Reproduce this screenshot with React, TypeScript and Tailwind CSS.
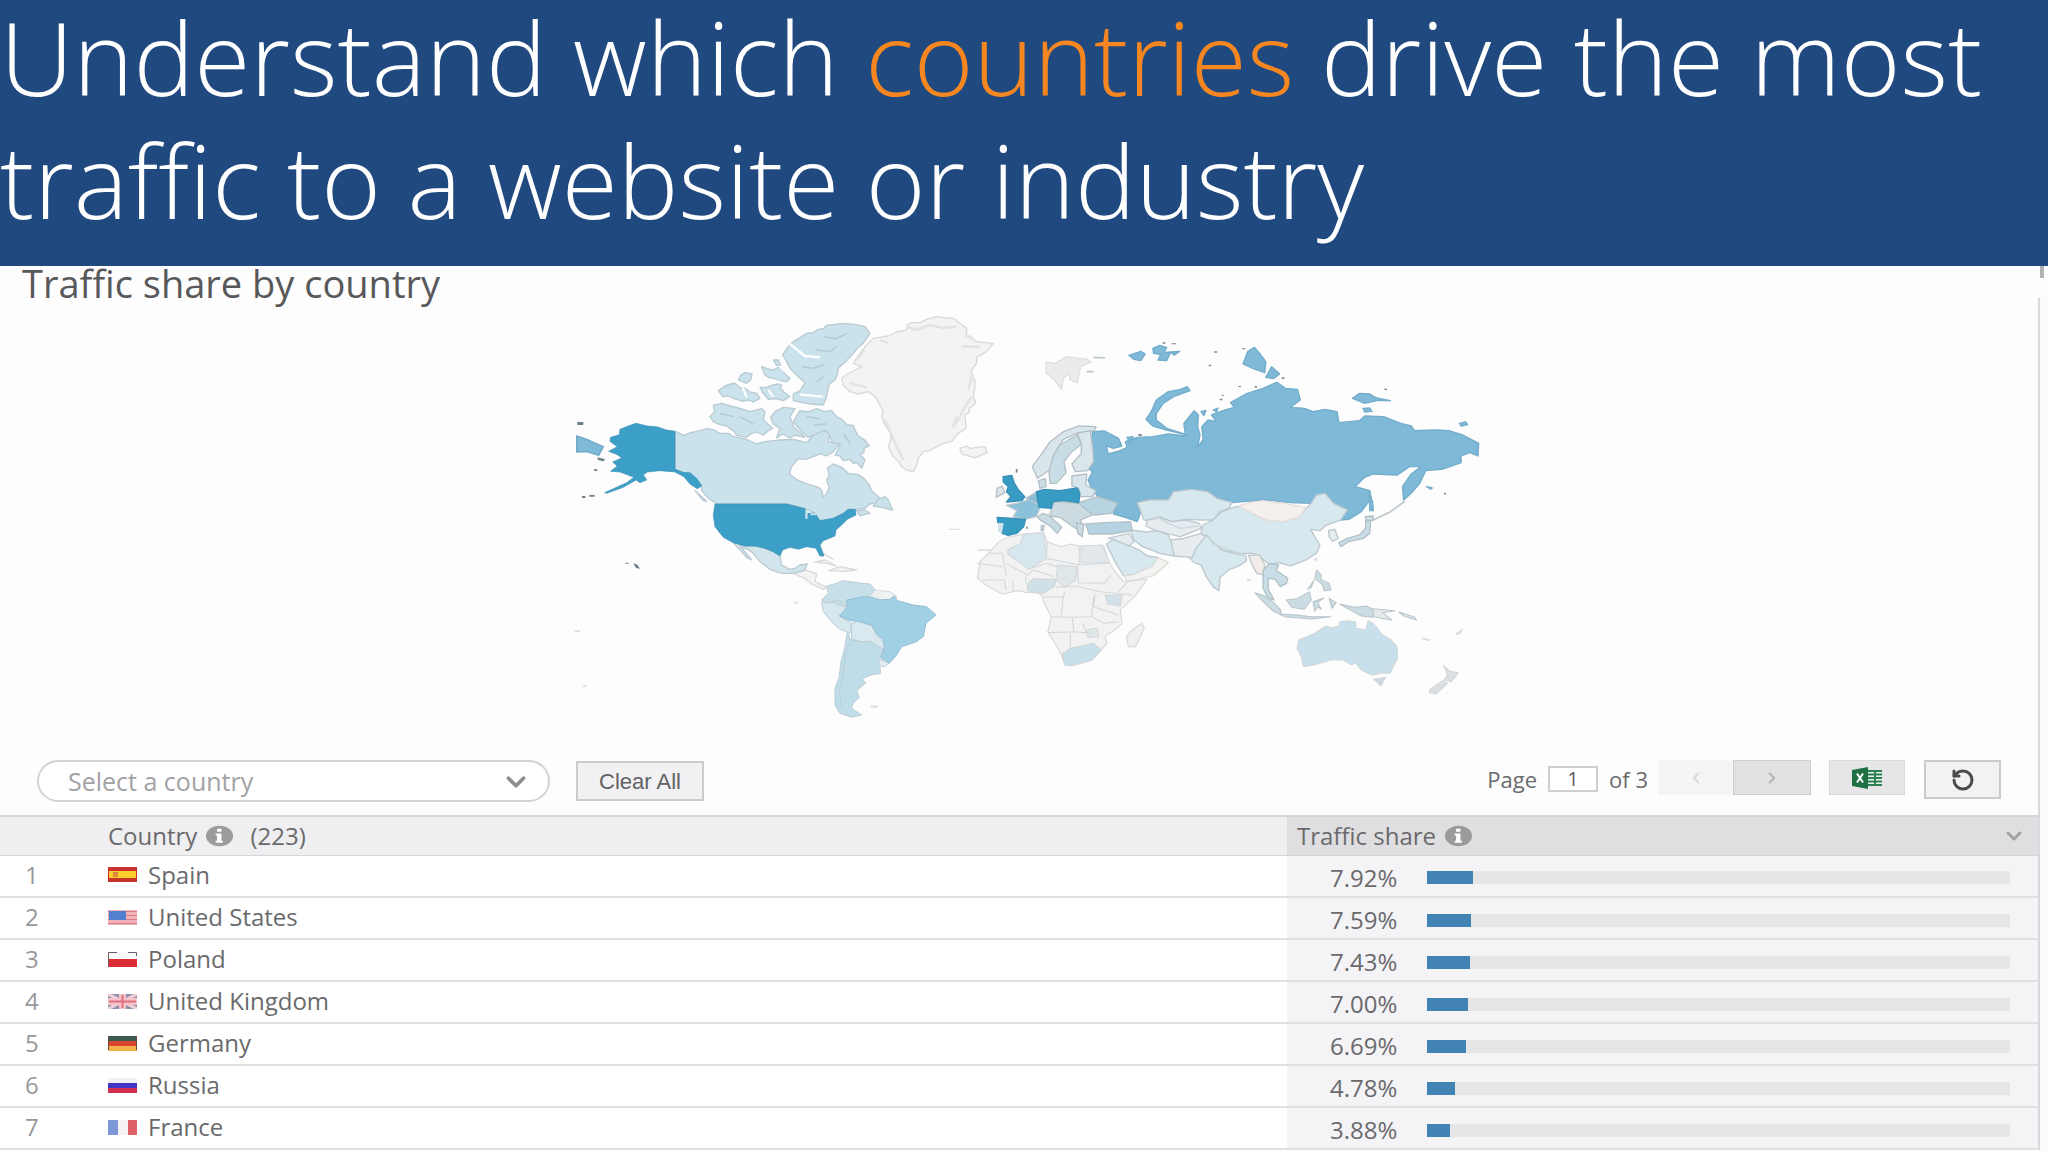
import React from 'react';
import { ChevronDown, ChevronLeft, ChevronRight, RotateCcw } from 'lucide-react';

const countries = [
  { name: 'Spain', share: 7.92 },
  { name: 'United States', share: 7.59 },
  { name: 'Poland', share: 7.43 },
  { name: 'United Kingdom', share: 7.0 },
  { name: 'Germany', share: 6.69 },
  { name: 'Russia', share: 4.78 },
  { name: 'France', share: 3.88 },
];

function Flag({ name }: { name: string }) {
  return (
    <svg viewBox="0 0 29 15" className="w-[29px] h-[15px] shrink-0" aria-hidden="true">
      {name === 'Spain' && (
        <>
          <path fill="#c8332b" d="M0 0h29v15H0z" />
          <path fill="#fbd02e" d="M1 4h27v7H1z" />
          <path fill="#dd8a3c" d="M5 5h5v5H5z" />
        </>
      )}
      {name === 'United States' && (
        <>
          <path fill="#f0b4b8" d="M0 0h29v15H0z" />
          <path stroke="#dd7d86" d="M0 1.500h29M0 5.500h29M0 9.500h29M0 13.500h29" />
          <path fill="#5080cf" d="M1 1h17v9H1z" />
        </>
      )}
      {name === 'Poland' && (
        <>
          <path fill="#fafafa" d="M0 0h29v8H0z" />
          <path fill="#de2c37" d="M0 7h29v8H0z" />
          <path stroke="#6e5c60" fill="none" d="M0.500 14V0.500H9M20 0.500h8.500V4" />
        </>
      )}
      {name === 'United Kingdom' && (
        <>
          <path fill="#8c8fae" d="M0 0h29v15H0z" />
          <path stroke="#f3cfd5" strokeWidth="3" d="M0 0l29 15M29 0L0 15" />
          <path stroke="#f6c3ca" strokeWidth="7" d="M0 7.500h29M14.500 0v15" />
          <path stroke="#e0707f" strokeWidth="2" d="M1 7.500h27M14.500 1v13" />
        </>
      )}
      {name === 'Germany' && (
        <>
          <path fill="#3c5a50" d="M0 0h29v5H0z" />
          <path fill="#d8452f" d="M0 5h29v5H0z" />
          <path fill="#f2b24a" d="M0 10h29v5H0z" />
          <path stroke="#6f4a3a" fill="none" d="M0.500 0v14M28.500 0v14" />
        </>
      )}
      {name === 'Russia' && (
        <>
          <path fill="#f1eef4" d="M0 0h29v5H0z" />
          <path fill="#3f36c4" d="M0 5h29v5H0z" />
          <path fill="#d2304f" d="M0 10h29v5H0z" />
        </>
      )}
      {name === 'France' && (
        <>
          <path fill="#7d98d8" d="M0 0h10v15H0z" />
          <path fill="#f6f1f4" d="M10 0h10v15H10z" />
          <path fill="#de6168" d="M20 0h9v15h-9z" />
        </>
      )}
    </svg>
  );
}

function InfoIcon() {
  return (
    <svg viewBox="0 0 30 22" className="w-[29px] h-[22px] shrink-0" aria-hidden="true">
      <ellipse cx="15" cy="11" rx="14" ry="10.500" fill="#9b9b9d" />
      <path fill="#fff" d="M12.500 3.500h4.500v3h-4.500zM11 8.500h6v7.500h1.500v2H11v-2h1.500v-5.500H11z" />
    </svg>
  );
}

function ExcelIcon() {
  return (
    <svg viewBox="0 0 32 22" className="w-[32px] h-[22px]" aria-hidden="true">
      <path fill="#e7f2ea" d="M16 3h15v16H16z" />
      <path stroke="#2c8052" strokeWidth="2" d="M17 4h14M17 7.500h14M17 11h14M17 14.500h14M17 18h14M24 3v16" />
      <path fill="#1f7145" d="M1 3l16-3v22L1 19z" />
      <path stroke="#fff" strokeWidth="2" d="M6 6.500l6 9M12 6.500l-6 9" />
    </svg>
  );
}

function WorldMap() {
  return (
    <svg viewBox="-11 0 940 430" className="block w-[940px] max-w-full h-auto" role="img" aria-label="Traffic share map" strokeLinejoin="round">
      {/* North America */}
      <g transform="scale(.3333)" stroke="#b9cad2" strokeWidth="4">
        <g fill="#c9e2eb">
          <path d="M345 394L372 406 392 398 420 392 440 386 462 390 480 400 505 400 520 410 560 418 590 432 620 424 660 420 700 418 740 428 765 400 790 392 810 400 805 425 838 432 820 455 800 468 780 462 760 470 738 478 715 476 695 500 688 522 712 540 740 552 775 562 785 570 790 592 800 580 808 562 800 540 808 525 802 505 820 492 845 502 865 520 895 524 912 535 928 555 935 572 955 590 968 605 930 612 915 625 885 628 850 640 820 655 780 662 765 640 735 626 680 612 470 612 445 595 425 572 425 556 395 530 372 518 345 508Z" />
          <path d="M720 332L745 336 770 326 792 334 815 332 830 350 845 358 862 374 880 376 886 392 895 408 914 420 928 438 912 445 912 458 900 462 915 480 905 505 892 488 880 490 868 478 850 482 840 468 826 465 842 432 818 428 808 402 795 390 772 400 745 412 722 392 700 365Z" />
          <path d="M460 316L485 310 510 318 540 325 570 335 605 326 615 335 610 360 638 385 625 392 610 405 590 396 575 400 560 412 530 406 520 392 500 378 480 374 460 365 450 350 464 335Z" />
          <path d="M632 352L645 335 670 322 705 326 690 350 702 382 735 412 705 405 690 414 668 402 650 414 660 385 640 372Z" />
          <path d="M668 165L685 140 700 125 722 112 740 100 760 98 775 88 790 86 800 76 850 70 890 74 915 80 930 100 910 130 895 142 880 160 858 184 835 205 832 225 825 240 808 252 805 265 800 290 790 315 750 312 700 302 700 282 720 272 735 248 715 230 690 205 680 185Z" />
          <path d="M475 272L495 258 512 252 525 250 538 262 555 265 570 276 590 280 600 295 580 306 565 300 550 304 520 295 505 288 488 290ZM535 240L542 226 555 218 576 222 572 240 560 250ZM605 200L622 206 640 210 655 202 670 205 676 222 690 235 680 245 655 242 640 235 625 232 615 225ZM600 262L620 262 640 255 665 250 662 265 672 276 690 290 670 302 650 296 625 298 610 280ZM640 180L655 180 662 195 650 196Z" />
          <path d="M955 598L975 590 985 600 990 612 998 630 965 622 940 618ZM890 632L915 630 930 640 900 648ZM405 572L425 590 440 604 430 602Z" />
        </g>
        <path fill="none" stroke="#fdfeff" strokeWidth="7" d="M690 132L735 168 780 172M660 200L700 235 730 250M720 284L790 290M640 240L690 258M548 262L560 292M625 270L640 290" />
        <path fill="none" stroke="#b4c8d1" d="M790 110L830 116 860 100M770 150L810 155 830 140M725 200L760 205 790 195M790 230L770 245M740 350L780 356M760 375L800 372M850 400L870 430M480 340L520 350M540 350L580 372" />
        <g fill="#f3f3f5" stroke="#d9d9dc" strokeWidth="4">
          <path d="M845 235L862 222 905 200 880 190 900 160 920 135 940 115 985 108 1010 96 1040 90 1042 74 1055 68 1080 68 1100 58 1130 50 1160 54 1180 55 1200 70 1220 85 1220 105 1250 125 1300 130 1280 155 1250 172 1250 190 1235 210 1235 230 1245 240 1245 260 1240 290 1248 310 1228 325 1228 338 1215 345 1218 385 1195 400 1175 425 1150 430 1130 440 1110 452 1090 455 1075 475 1070 495 1060 515 1040 510 1025 500 1012 480 1000 470 985 440 992 420 992 400 975 375 965 350 970 335 960 315 945 290 925 275 895 282 870 275 850 255Z" />
          <path d="M1200 445L1222 438 1230 446 1250 442 1275 440 1282 458 1245 474 1205 462Z" />
          <path d="M700 820L735 810 770 822 765 845 800 862 790 868 755 852 735 836Z" />
          <path d="M765 786L795 780 830 798 800 790ZM805 812L840 800 890 810 850 814ZM790 760L820 778" />
        </g>
        <path fill="none" stroke="#e3e3e6" strokeWidth="8" d="M1040 80L1070 90 1110 75 1150 84 1190 80M1215 105L1240 115M1205 140L1260 140M960 120L985 130M890 180L915 150M870 250L920 262M975 360L990 395 1010 440 1030 480M1235 290L1215 320 1200 350 1180 380 1190 350M1238 220L1225 270" />
        <path fill="#d3e5ec" d="M520 728L555 738 585 738 615 745 640 755 660 768 665 795 690 808 705 805 720 795 742 792 732 812 700 820 665 820 630 808 600 785 575 755 540 738 575 780 560 772Z" />
        <g fill="#3c9fc7" stroke="#3990b5" strokeWidth="2">
          <path d="M152 412L178 404 180 388 205 378 228 370 262 378 290 380 320 390 345 394 345 508 372 518 390 518 410 535 425 558 412 566 390 552 372 530 345 516 300 512 262 516 250 524 260 540 240 548 228 540 190 562 140 580 134 578 200 548 222 532 180 516 152 514 172 498 158 486 185 474 172 464 146 454 172 440 150 424Z" />
          <path d="M465 612L680 612 735 626 740 640 765 640 780 662 820 655 850 640 865 628 886 628 888 645 862 658 845 675 828 690 825 708 790 722 780 735 792 768 780 768 768 745 740 740 715 748 690 742 668 750 660 768 640 755 615 745 585 738 555 738 520 728 490 712 465 680 460 645Z" />
          <path fill="#6d8089" stroke="none" d="M66 588h10v6H66zM88 585h16v5H88zM220 790l12 4 8 12-12-2zM196 788h10v3h-10zM52 366h18v9H52zM112 472l24 6-6 6-16-4zM1368 508h5v8h-5zM102 508h10v5h-10z" />
        </g>
        <path fill="#c9e2eb" stroke="none" d="M736 632h7v24h-7zM752 640h16v6h-16z" />
        <path fill="#7fb9d8" stroke="#6fa8c6" d="M50 408L85 420 130 440 116 466 80 455 50 456Z" />
      </g>

      {/* Europe and Asia */}
      <g transform="translate(400 20) scale(.3444 .3333)" stroke="#bdc9ce" strokeWidth="4">
        <g fill="#7fb9d8" stroke="#73adcb">
          <path d="M385 335L420 333 460 355 470 378 445 385 425 378 430 402 465 392 485 382 480 365 515 352 560 350 605 342 655 348 650 310 680 272 692 285 690 320 697 345 690 380 706 360 702 320 720 300 745 305 730 285 770 270 797 262 785 248 830 222 880 205 920 187 945 205 980 208 988 240 960 262 1000 265 1025 275 1060 268 1095 275 1100 308 1160 302 1175 288 1230 290 1280 310 1310 318 1320 332 1380 330 1420 332 1460 345 1506 370 1504 408 1480 398 1455 408 1455 428 1400 448 1352 452 1335 490 1310 520 1288 540 1285 500 1310 462 1338 440 1305 440 1270 465 1200 462 1175 472 1148 500 1190 512 1194 535 1165 575 1130 598 1102 600 1125 570 1085 550 1070 530 1050 522 1020 550 960 548 890 540 820 545 790 548 745 535 720 515 670 508 620 515 605 540 550 540 515 548 525 575 515 605 480 592 445 582 458 550 400 530 380 500 372 480 385 455 372 445 388 430 380 380Z" />
          <path d="M540 298L555 275 570 240 605 215 640 208 660 200 668 212 620 230 590 250 570 280 570 300 600 325 660 345 600 330 560 318Z" />
          <path d="M855 82L870 100 888 125 885 158 850 145 822 132 835 95ZM905 140L928 162 910 176 888 172Z" />
          <path d="M490 106L525 94 538 102 525 122 505 118ZM560 85L580 76 600 82 592 98 612 96 600 122 575 120 582 104 562 100ZM612 96L638 94 622 106Z" />
          <path d="M1140 235L1160 220 1190 222 1210 234 1250 242 1210 242 1175 250ZM1170 265L1190 264 1196 274 1175 276ZM1450 310L1468 306 1474 314 1455 318Z" />
          <path d="M1188 520L1198 545 1200 572 1190 572ZM1355 500l16 4-4 4zM485 352l18-2-10 20zM700 275l14-4-6 16zM735 270l14-6-4 12z" />
        </g>
        <g fill="#d8e8ef">
          <path d="M515 548L550 540 605 540 620 515 670 508 720 515 745 535 790 548 780 565 755 575 735 600 700 600 660 598 615 605 580 590 555 602 535 600 525 575Z" />
          <path d="M735 600L760 575 800 560 825 558 850 580 890 600 940 605 985 590 1005 565 1020 550 1035 525 1060 520 1085 550 1125 570 1105 600 1060 618 1045 632 1018 628 1030 650 1045 675 1035 700 1005 720 960 738 925 728 900 735 870 710 850 700 815 700 760 690 735 670 700 640 705 615Z" />
          <path d="M680 690L700 655 715 645 740 672 760 690 800 702 830 706 832 722 810 738 780 750 755 772 752 812 735 800 715 770 700 735 680 728 665 712Z" />
          <path d="M495 630L540 636 575 632 605 645 618 680 622 708 580 700 555 690 530 680 505 660Z" />
          <path d="M425 672L445 658 480 672 520 690 545 708 575 712 560 738 510 762 475 768 450 725Z" />
        </g>
        <g fill="#e6ecef">
          <path d="M545 600L580 592 615 605 655 600 695 610 700 625 640 650 600 640 560 628 540 618Z" />
          <path d="M612 660L650 655 700 640 712 650 685 685 675 712 622 708Z" />
          <path d="M430 655L490 640 505 665 490 678 445 658Z" />
          <path d="M575 712L605 728 560 768 485 786 478 768 510 762 560 738Z" fill="#f3f3f1" stroke="#deddd8" />
          <path d="M838 706L870 704 885 735 880 765 862 760 848 735Z" fill="#f1ebe9" />
          <path d="M810 558L840 548 880 542 905 546 940 550 1005 562 985 590 940 605 890 600 850 580Z" fill="#f4f0ee" stroke="#e7dfda" />
          <path d="M1070 632L1088 628 1098 655 1082 664 1072 650Z" />
        </g>
        <g fill="#c8dde5" stroke="#b3c1c7">
          <path d="M880 752L900 730 925 735 918 752 952 775 948 790 930 800 915 778 895 775 895 808 912 840 895 835 880 805Z" />
          <path d="M1100 668L1125 655 1160 645 1178 625 1178 600 1192 602 1190 640 1170 656 1130 664 1106 680ZM1176 590L1200 588 1198 602 1180 602Z" />
          <path d="M210 440L235 405 262 365 300 335 345 318 395 320 390 332 345 338 300 358 275 400 260 450 225 475Z" fill="#d9e6eb" />
          <path d="M258 455L270 410 290 375 340 345 352 372 320 400 302 425 308 458 280 490 262 490Z" />
          <path d="M340 340L378 332 385 380 388 425 370 452 335 455 325 432 352 400 352 370Z" fill="#dae6ea" />
          <path d="M325 468L368 462 365 495 395 512 385 530 348 530 345 505 325 498Z" fill="#d8e5ea" />
          <path d="M228 482L248 476 250 500 232 505Z" />
          <path d="M108 505L122 498 130 518 105 532Z" fill="#dfe6e8" />
          <path d="M345 548L400 530 458 550 440 580 390 585 345 565Z" fill="#b6d4e2" />
          <path d="M265 568L272 545 345 550 385 585 350 600 355 628 335 625 290 592 262 588Z" fill="#cddce2" />
          <path d="M225 592L240 580 260 588 295 622 282 640 262 618 236 602ZM338 608L360 612 355 650 342 640ZM236 618L244 616 242 632 236 632Z" fill="#c8dbe3" />
          <path d="M365 612L420 608 495 605 500 632 440 642 375 642Z" fill="#b5d3e1" />
          <path d="M192 535L222 516 228 556 205 548Z" fill="#8cbfda" />
        </g>
        <path fill="#8cc1db" d="M135 556L165 550 200 540 235 556 222 590 190 598 155 590 165 572Z" />
        <g fill="#379bc4" stroke="#3990b5">
          <path d="M222 515L245 508 290 512 340 504 348 520 345 548 300 542 270 545 265 565 230 562 225 540Z" />
          <path d="M125 470L150 466 158 490 170 510 188 530 180 542 135 546 148 530 135 515 140 500 126 486Z" />
          <path d="M108 592L190 598 185 620 165 640 140 646 122 640 128 612 110 608Z" />
        </g>
        <path fill="#cfe3ea" stroke="none" d="M112 608L127 610 122 638 110 636Z" />
        <g fill="#ebebed" stroke="#dfdfe2">
          <path d="M250 125L275 130 310 110 370 118 380 126 350 140 340 188 320 180 318 160 300 175 295 208 275 180 250 160Z" />
        </g>
        <path fill="none" stroke="#bcc7cb" strokeWidth="5" strokeLinecap="round" d="M1200 600L1250 575 1290 545M390 112L420 114M370 155L386 155" />
        <path fill="#7b8c94" stroke="none" d="M738 94h9v4h-9zM722 134h7v5h-7zM820 84h8v4h-8zM588 67h8v4h-8zM614 70h14v3h-14zM162 448h4v10h-4zM192 620h5v6h-5zM518 342h10v6h-10zM760 224h5v4h-5zM856 198h6v5h-6zM1232 206h8v4h-8zM1406 518h5v6h-5zM754 236h8v5h-8zM808 198h8v3h-8zM934 172h8v5h-8z" />
        <path fill="none" stroke="#ccd7dc" d="M560 602L570 590 605 610 640 625 690 618M250 585L300 560 350 575M300 560L330 610M720 645L735 672 830 706" />
      </g>

      {/* South America */}
      <g transform="translate(0 200) scale(.3333)" stroke="#bccdd5" strokeWidth="3">
        <path fill="#c6dfe9" d="M800 258L830 250 850 242 905 250 930 252 945 270 930 290 880 296 855 320 800 310 785 300 805 280Z" />
        <path fill="#eef0f1" stroke="#d8dbdd" d="M930 290L945 270 990 275 1010 288 1005 302 960 298Z" />
        <path fill="#d6e7ee" d="M785 305L820 308 860 322 840 350 875 370 870 400 835 385 812 362 790 335Z" />
        <path fill="#dae9ef" d="M875 370L895 364 935 378 950 405 972 430 970 448 930 424 905 425 875 418Z" />
        <path fill="#bedde8" d="M862 395L872 420 905 425 930 424 970 448 958 478 962 520 930 526 905 538 918 548 890 572 898 592 880 610 875 625 905 645 875 652 840 640 825 615 825 565 838 530 842 490 855 440Z" />
        <path fill="#e2ecf0" d="M958 478L988 488 975 500 956 496Z" />
        <path fill="#a1cfe4" stroke="#94c0d4" d="M860 300L885 296 905 290 932 292 960 300 990 298 1003 288 1012 302 1060 315 1100 320 1128 345 1098 370 1090 410 1070 425 1025 440 1010 465 988 490 962 474 975 440 968 418 952 404 935 375 895 364 870 362 838 348 862 322Z" />
        <path fill="none" d="M875 420L858 450 850 520 838 570 845 625M800 310L835 300 860 320" />
        <path fill="#e4e2e6" stroke="none" d="M932 616h22v8h-22zM44 390h16v7H44zM68 556h12v6H68zM700 305h14v6h-14z" />
      </g>

      {/* Africa and Oceania */}
      <g transform="translate(380 200) scale(.357 .3333)" stroke="#d3d6d8" strokeWidth="3">
        <path fill="#f2f2f3" d="M165 125L190 112 235 102 290 98 300 125 340 140 365 132 390 138 460 140 470 180 490 215 515 245 580 238 545 290 505 330 510 370 495 385 462 410 468 430 450 452 425 480 370 497 350 495 340 465 325 435 302 395 312 350 292 310 285 285 268 275 245 278 220 272 175 282 135 260 105 235 112 185 140 155Z" />
        <g fill="#d6e7ee">
          <path d="M190 150L225 130 235 102 290 98 298 175 250 208 190 162Z" />
          <path d="M395 138L455 135 475 188 395 188Z" fill="#e2e8eb" />
          <path d="M330 195L385 200 380 240 350 262 325 240Z" fill="#dfe7ea" />
          <path d="M245 250L262 236 325 238 320 260 290 280 262 278 245 272Z" fill="#cfe0e6" />
          <path d="M462 285L510 285 505 318 470 312Z" fill="#d3e2ea" />
          <path d="M342 462L365 445 430 430 452 450 425 480 370 497 350 495Z" fill="#c8e0eb" />
          <path d="M410 390L440 385 445 410 415 412Z" fill="#e0e8ea" />
        </g>
        <path fill="none" d="M105 190L175 200M140 160L175 160 185 225M185 190L245 225 262 210 320 230M245 208L300 190 330 200M298 175L390 195M300 125L298 175M390 140L390 195 470 190M385 200L388 248 460 250 480 225M325 262L380 258 450 275 540 285M290 290L345 292 350 275M345 292L340 345M310 350L370 352 375 395 302 398M370 352L425 350 430 290M430 320L500 345M425 350L460 370 500 365M375 395L430 400M365 400L365 445M120 240L180 240 185 270M205 245L205 275M240 230L240 250M435 280L430 320M400 370L410 400M530 240L500 275" />
        <path fill="#f0f0f1" d="M522 412L535 392 565 370 572 385 548 440 528 440Z" />
        <path fill="#c8e0ec" d="M1005 420L1050 400 1080 378 1100 384 1118 378 1118 366 1140 362 1165 366 1165 385 1192 390 1200 362 1215 372 1240 405 1262 418 1280 440 1282 475 1260 520 1235 520 1210 526 1180 510 1165 490 1150 494 1130 480 1095 480 1050 494 1018 500 1012 470 1000 445Z" />
        <path fill="#cdd8dd" d="M1215 538L1248 532 1235 558Z" />
        <path fill="#dcdfe2" d="M1410 496L1428 514 1452 518 1432 545 1412 540 1422 524ZM1408 542L1422 550 1390 582 1370 578 1372 568Z" />
        <g fill="#cbdce2" stroke="#b9c4c9">
          <path d="M882 278L910 288 935 308 955 330 955 342 935 335 905 305ZM950 342L1000 345 1040 350 1095 350 1040 357 965 350Z" />
          <path d="M970 300L1000 296 1035 275 1040 300 1020 328 985 322Z" />
          <path d="M1045 305L1075 294 1058 308 1068 328 1058 320 1050 334ZM1090 295L1110 308 1098 325Z" />
          <path d="M1055 210L1068 225 1066 238 1090 250 1095 270 1075 272 1072 255 1050 235ZM1048 240L1040 262 1030 268Z" />
          <path d="M1120 312L1160 322 1195 318 1215 330 1212 352 1180 348 1150 330Z" />
          <path fill="#e6eaec" d="M1213 326L1275 332 1240 338 1265 360 1215 350ZM1285 336L1330 352 1335 360 1300 348Z" />
        </g>
        <path fill="#dcdfe3" stroke="none" d="M1350 412l24 6-4 6-20-6zM1445 398l22-14-8 18-14 4zM860 236h10v8h-10zM105 148h40v5h-40zM1046 178l12-6-4 14zM25 86h30v4H25z" />
      </g>
    </svg>
  );
}

export default function App() {
  return (
    <div className="min-h-screen bg-[#fdfdfe] font-['Open_Sans',sans-serif] text-[#6a6a6c]">
      {/* Banner */}
      <header className="flex bg-[#20497f] pb-[25px]">
        <h1 className="-mt-[5px] text-[102px] leading-[123px] font-light text-white">
          Understand which <span className="text-[#f6861f]">countries</span> drive the most traffic to a website or industry
        </h1>
      </header>

      <div className="flex">
        <main className="min-w-0 flex-1">
          <h2 className="pl-[22px] text-[38px] leading-[34px] text-[#58585a]">Traffic share by country</h2>

          <div className="flex justify-center">
            <WorldMap />
          </div>

          {/* Toolbar */}
          <div className="flex items-start justify-between pt-[30px] pr-[37px] pb-[13px] pl-[37px]">
            <div className="flex items-center gap-[26px]">
              <div className="relative">
                <select
                  aria-label="Select a country"
                  className="h-[42px] w-[513px] appearance-none rounded-full border-2 border-[#d3d2d6] bg-white pl-[29px] text-[25px] leading-8 text-[#a2a2a4]"
                >
                  <option>Select a country</option>
                </select>
                <ChevronDown className="pointer-events-none absolute top-[7px] right-[19px] h-[30px] w-[30px] text-[#8d8d8f]" strokeWidth={3} />
              </div>
              <button className="h-[40px] w-[128px] border-2 border-[#cbcacd] bg-[#f1f1f3] font-['Liberation_Sans',sans-serif] text-[22px] text-[#626264]">
                Clear All
              </button>
            </div>

            <div className="flex items-start">
              <div className="flex h-[38px] items-center text-[22px]">
                <label htmlFor="page">Page</label>
                <input id="page" defaultValue="1" className="mx-[11px] h-[26px] w-[50px] border-2 border-[#cfced2] bg-white text-center text-[20px] text-[#5c5c5e]" />
                <span>of 3</span>
              </div>
              <button aria-label="Previous page" className="ml-[10px] flex h-[35px] w-[75px] items-center justify-center bg-[#f5f4f6] text-[#dad9dc]">
                <ChevronLeft className="h-[18px] w-[18px]" strokeWidth={3} />
              </button>
              <button aria-label="Next page" className="flex h-[35px] w-[78px] items-center justify-center border border-[#cfced1] bg-[#e1e0e3] text-[#b5b4b7]">
                <ChevronRight className="h-[18px] w-[18px]" strokeWidth={3} />
              </button>
              <button aria-label="Export to Excel" className="ml-[18px] flex h-[35px] w-[76px] items-center justify-center border border-[#d9d8da] bg-[#e6e5e7]">
                <ExcelIcon />
              </button>
              <button aria-label="Reset" className="ml-[19px] flex h-[39px] w-[77px] items-center justify-center border-2 border-[#cbcacd] bg-[#f2f1f3] text-[#4c4c4e]">
                <RotateCcw className="h-[24px] w-[26px]" strokeWidth={3} />
              </button>
            </div>
          </div>

          {/* Countries table */}
          <table className="w-full table-fixed border-collapse text-left text-[24px] leading-7">
            <colgroup>
              <col className="w-[108px]" />
              <col />
              <col className="w-[751px]" />
            </colgroup>
            <thead>
              <tr className="h-[39px] border-t-2 border-b border-[#d5d4d7]">
                <th className="bg-[#efeef1]" aria-label="Rank" />
                <th className="bg-[#efeef1] p-0 font-normal">
                  <span className="flex items-center gap-2">
                    Country <InfoIcon /> <span className="pl-2">(223)</span>
                  </span>
                </th>
                <th className="bg-[#dfdee1] py-0 pr-3 pl-[10px] font-normal">
                  <span className="flex items-center gap-2">
                    Traffic share <InfoIcon />
                    <ChevronDown className="ml-auto h-[24px] w-[24px] text-[#a3a2a5]" strokeWidth={3} />
                  </span>
                </th>
              </tr>
            </thead>
            <tbody>
              {countries.map((country, i) => (
                <tr key={country.name} className="h-[42px] border-b-2 border-[#e0dfe2]">
                  <td className="bg-white pt-0 pr-0 pb-0.5 pl-[25px] text-[#98989a]">{i + 1}</td>
                  <td className="bg-white p-0 pb-0.5">
                    <span className="flex items-center gap-[11px]">
                      <Flag name={country.name} />
                      {country.name}
                    </span>
                  </td>
                  <td className="bg-[#f4f3f6] pt-1 pr-[28px] pb-0 pl-[43px]">
                    <span className="flex items-center">
                      <span className="w-[97px]">{country.share.toFixed(2)}%</span>
                      <span className="h-[13px] flex-1 bg-[#e6e5e8]">
                        <span className="block h-full bg-[#4184b4]" style={{ width: `${country.share}%` }} />
                      </span>
                    </span>
                  </td>
                </tr>
              ))}
            </tbody>
          </table>
        </main>

        {/* Scroll edge */}
        <aside className="flex w-[10px] flex-col">
          <div className="ml-0.5 h-3 w-1 bg-[#b4b4b6]" />
          <div className="mt-5 flex-1 border-l-2 border-[#d9d8dc] bg-[#fbfafc]" />
        </aside>
      </div>
    </div>
  );
}
